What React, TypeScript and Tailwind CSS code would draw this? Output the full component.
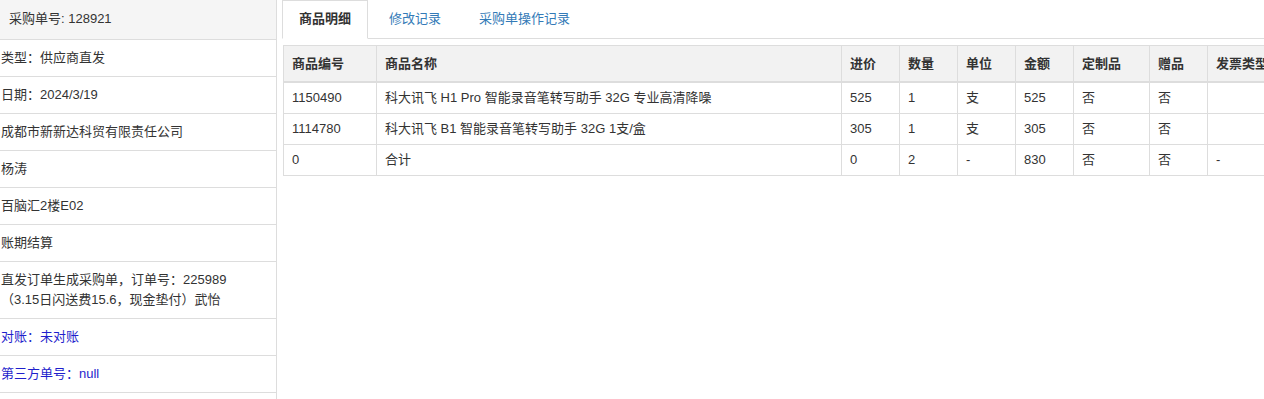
import React from 'react';

interface InfoRow {
    lines: string[];
    blue?: boolean;
}

const infoRows: InfoRow[] = [
    { lines: ['类型：供应商直发'] },
    { lines: ['日期：2024/3/19'] },
    { lines: ['成都市新新达科贸有限责任公司'] },
    { lines: ['杨涛'] },
    { lines: ['百脑汇2楼E02'] },
    { lines: ['账期结算'] },
    { lines: ['直发订单生成采购单，订单号：225989', '（3.15日闪送费15.6，现金垫付）武怡'] },
    { lines: ['对账：未对账'], blue: true },
    { lines: ['第三方单号：null'], blue: true },
];

const columns = [
    { label: '商品编号', w: 'w-[93px]' },
    { label: '商品名称', w: 'w-[465px]' },
    { label: '进价', w: 'w-[58px]' },
    { label: '数量', w: 'w-[58px]' },
    { label: '单位', w: 'w-[58px]' },
    { label: '金额', w: 'w-[58px]' },
    { label: '定制品', w: 'w-[76px]' },
    { label: '赠品', w: 'w-[58px]' },
    { label: '发票类型', w: 'w-[90px]' },
];

const rows = [
    ['1150490', '科大讯飞 H1 Pro 智能录音笔转写助手 32G 专业高清降噪', '525', '1', '支', '525', '否', '否', ''],
    ['1114780', '科大讯飞 B1 智能录音笔转写助手 32G 1支/盒', '305', '1', '支', '305', '否', '否', ''],
    ['0', '合计', '0', '2', '-', '830', '否', '否', '-'],
];

export default function App() {
    return (
        <div className="flex w-[1264px] h-[399px] overflow-hidden bg-white text-[13px] text-[#333] font-['Liberation_Sans','Noto_Sans_CJK_SC',sans-serif]">
            {/* Left info panel */}
            <div className="w-[277px] flex-shrink-0 border-r border-[#ddd]">
                <div className="h-[40px] bg-[#f5f5f5] border-b border-[#ddd] pl-[9px] leading-[38px]">
                    采购单号: 128921
                </div>
                {infoRows.map((r, i) => (
                    <div
                        key={i}
                        className={`border-b border-[#ddd] pl-[1px] pr-2 py-[8px] leading-[20px] whitespace-nowrap ${r.blue ? 'text-[#1f1fcc]' : ''}`}
                    >
                        {r.lines.map((l) => (
                            <div key={l}>{l}</div>
                        ))}
                    </div>
                ))}
            </div>

            {/* Right content */}
            <div className="flex-1 min-w-0 pl-[5px]">
                <div className="flex border-b border-[#ddd] h-[39px]">
                    <div className="px-4 border border-[#ddd] border-b-white -mb-px bg-white font-bold leading-[35px] h-[39px]">
                        商品明细
                    </div>
                    <div className="ml-[4px] px-4 border border-transparent leading-[35px] text-[#337ab7]">修改记录</div>
                    <div className="ml-[4px] px-4 border border-transparent leading-[35px] text-[#337ab7]">采购单操作记录</div>
                </div>

                <table className="mt-[6px] ml-px border-collapse border border-[#ddd] table-fixed w-[1014px]">
                    <thead>
                        <tr className="bg-[#f2f2f2]">
                            {columns.map((c) => (
                                <th
                                    key={c.label}
                                    className={`${c.w} text-left font-bold px-2 py-[7px] leading-[21px] border border-[#ddd] border-b-2 whitespace-nowrap`}
                                >
                                    {c.label}
                                </th>
                            ))}
                        </tr>
                    </thead>
                    <tbody>
                        {rows.map((row, i) => (
                            <tr key={i}>
                                {row.map((cell, j) => (
                                    <td key={j} className="px-2 py-[5px] leading-5 border border-[#ddd] whitespace-nowrap">
                                        {cell}
                                    </td>
                                ))}
                            </tr>
                        ))}
                    </tbody>
                </table>
            </div>
        </div>
    );
}
